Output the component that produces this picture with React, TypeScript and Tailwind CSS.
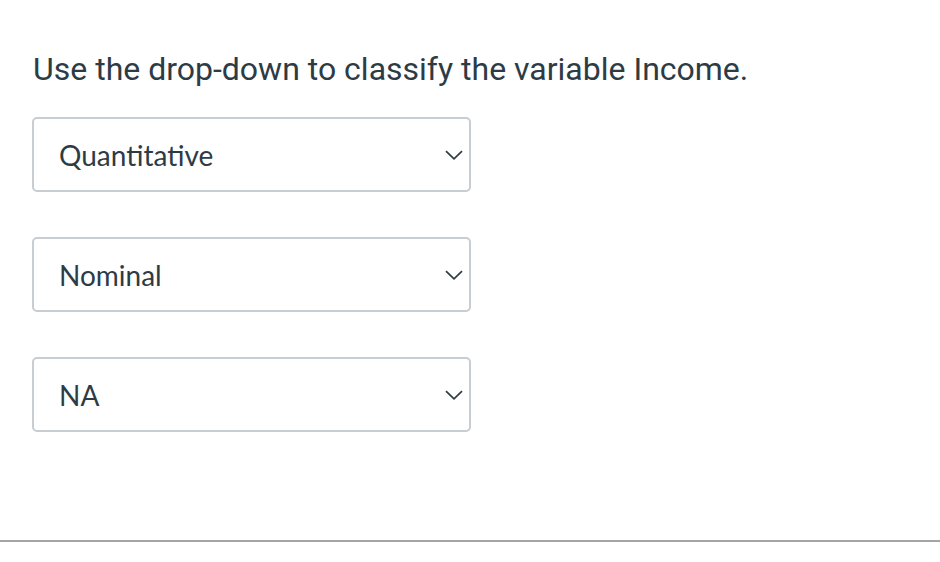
import React from "react";

const OPTIONS = ["Quantitative", "Nominal", "NA"];

function Chevron() {
  return (
    <svg width="18" height="10" viewBox="0 0 18 10" fill="none" className="shrink-0">
      <path d="M1 1.2 L9 8.8 L17 1.2" stroke="#2d3b45" strokeWidth="1.7" />
    </svg>
  );
}

export default function App() {
  return (
    <div className="w-[940px] h-[562px] bg-white flex flex-col">
      <div className="px-[32px] pt-[50px]">
        <h1
          className="pl-px text-[32px] leading-[38px] text-[#2d3b45]"
          style={{ fontFamily: "Roboto, sans-serif" }}
        >
          Use the drop-down to classify the variable Income.
        </h1>
        <div className="mt-[29px] flex flex-col gap-[45px]">
          {OPTIONS.map((opt) => (
            <div
              key={opt}
              className="w-[439px] h-[75px] border-2 border-[#c7cdd1] rounded-[5px] flex items-center justify-between pl-[25px] pr-[6px]"
            >
              <span
                className="text-[28px] text-[#2d3b45]"
                style={{ fontFamily: "Lato, sans-serif" }}
              >
                {opt}
              </span>
              <Chevron />
            </div>
          ))}
        </div>
      </div>
      <div className="mt-[108px] h-[2px] w-full bg-[#a5a5a5]" />
    </div>
  );
}
